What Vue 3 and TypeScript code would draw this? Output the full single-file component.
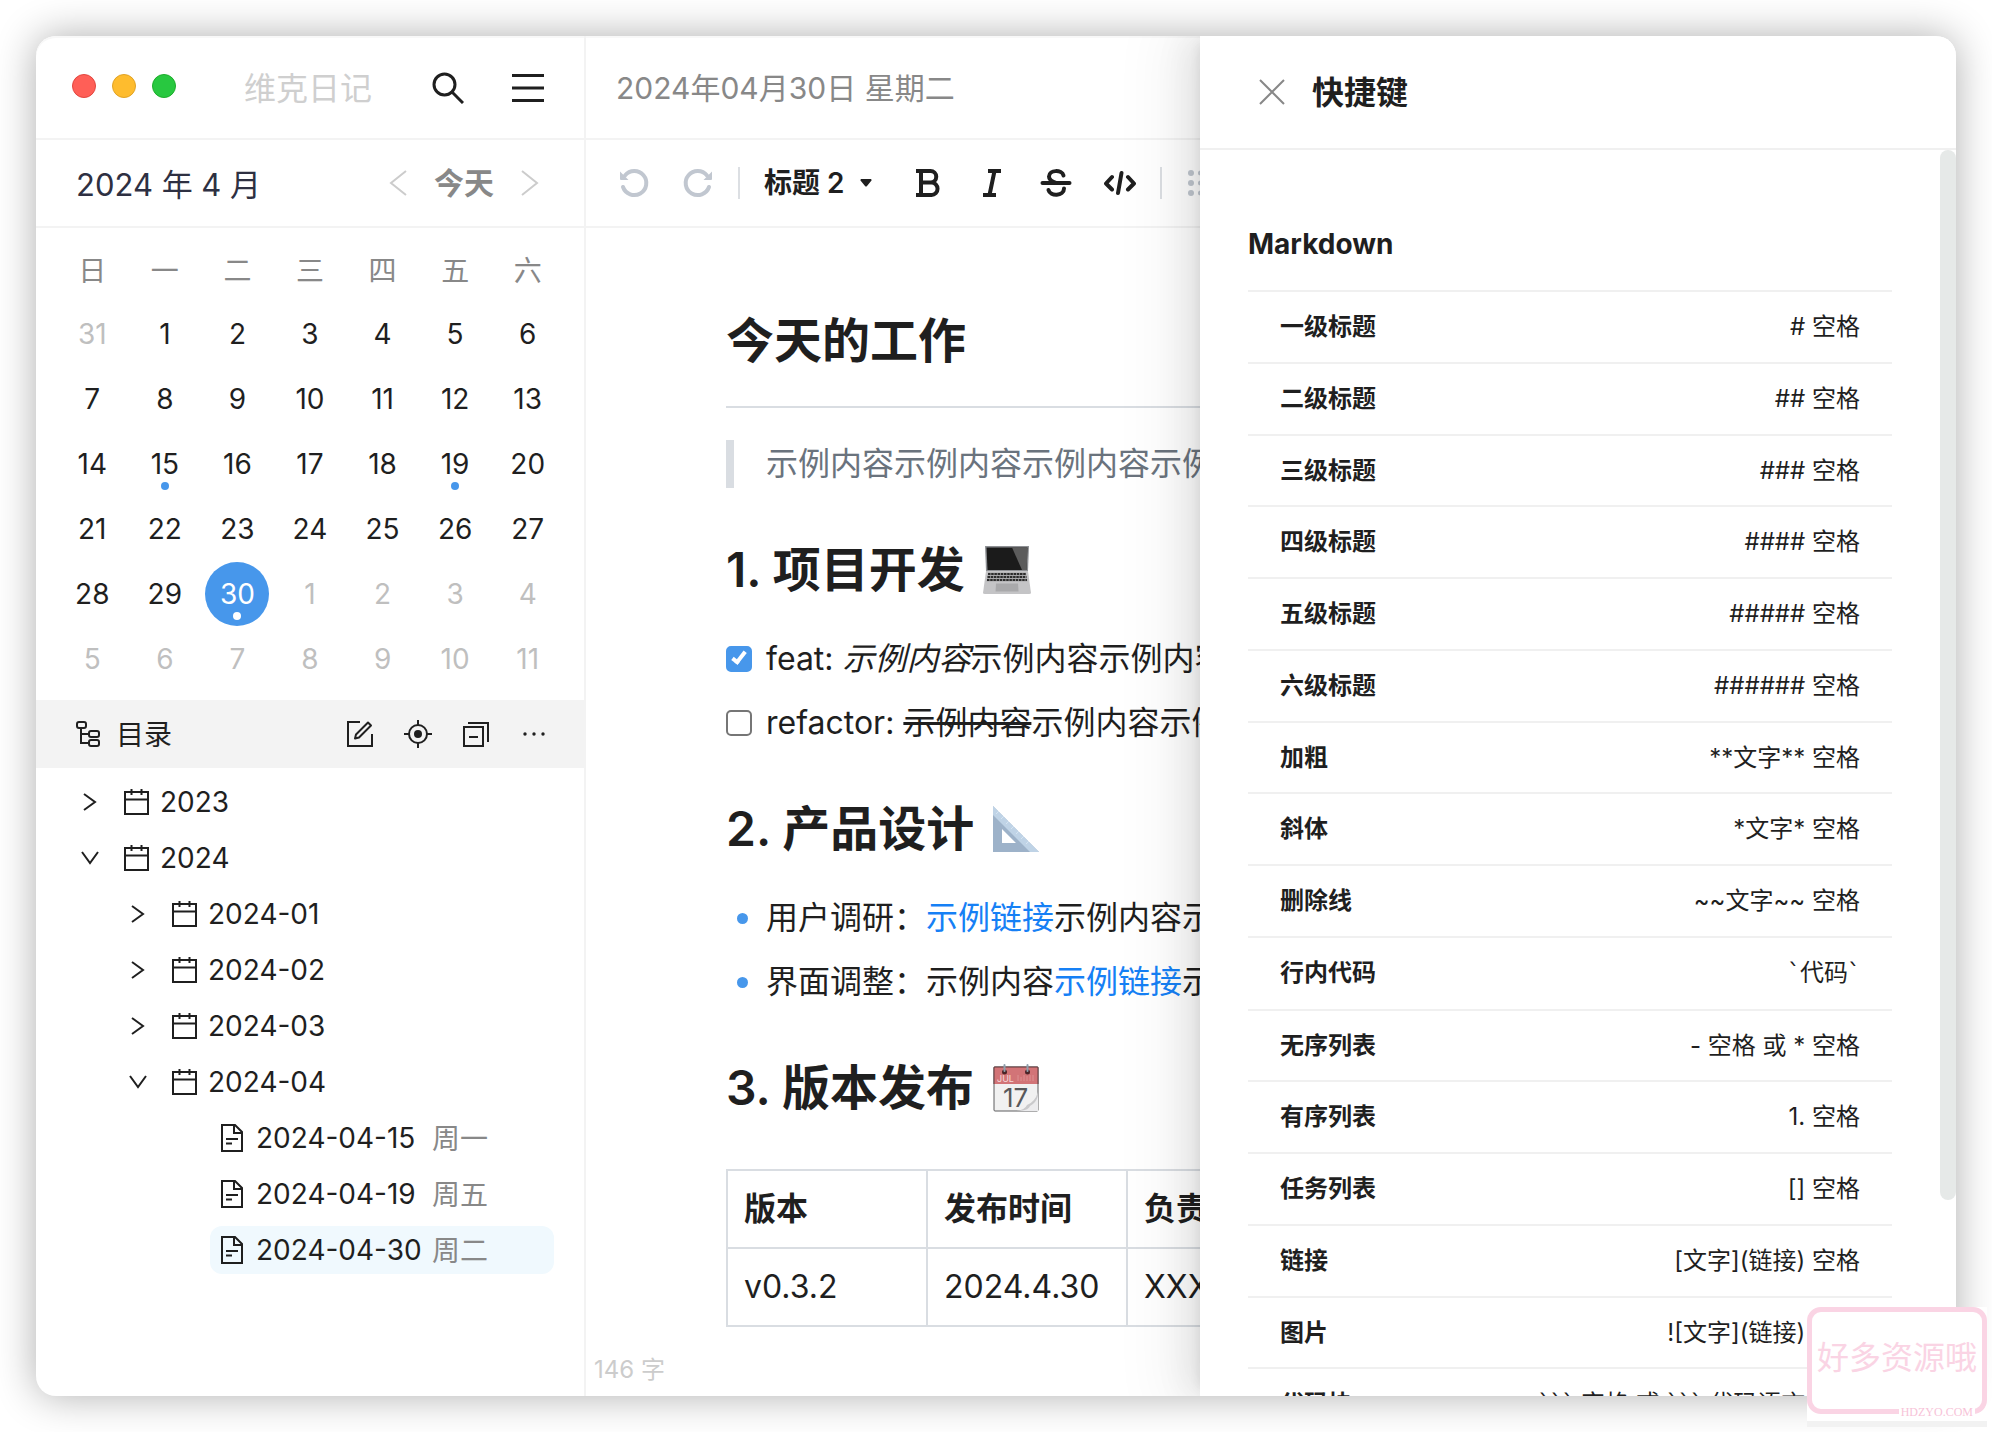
<script setup lang="ts">
import { ref } from 'vue'

interface Day {
  n: number
  out: boolean
  dot: boolean
  today: boolean
}
interface Node {
  level: number
  kind: 'open' | 'closed' | 'file'
  label: string
  week?: string
  active?: boolean
}

const weekdays = ['日', '一', '二', '三', '四', '五', '六']

// Six weeks starting on Sunday, 31 March 2024
const days: Day[] = Array.from({ length: 42 }, (_, i) => {
  const date = new Date(2024, 2, 31 + i)
  const out = date.getMonth() !== 3
  const n = date.getDate()
  return { n, out, dot: !out && [15, 19, 30].includes(n), today: !out && n === 30 }
})

const tree: Node[] = [
  { level: 0, kind: 'closed', label: '2023' },
  { level: 0, kind: 'open', label: '2024' },
  { level: 1, kind: 'closed', label: '2024-01' },
  { level: 1, kind: 'closed', label: '2024-02' },
  { level: 1, kind: 'closed', label: '2024-03' },
  { level: 1, kind: 'open', label: '2024-04' },
  { level: 2, kind: 'file', label: '2024-04-15', week: '周一' },
  { level: 2, kind: 'file', label: '2024-04-19', week: '周五' },
  { level: 2, kind: 'file', label: '2024-04-30', week: '周二', active: true },
]

const shortcuts: [string, string][] = [
  ['一级标题', '# 空格'],
  ['二级标题', '## 空格'],
  ['三级标题', '### 空格'],
  ['四级标题', '#### 空格'],
  ['五级标题', '##### 空格'],
  ['六级标题', '###### 空格'],
  ['加粗', '**文字** 空格'],
  ['斜体', '*文字* 空格'],
  ['删除线', '~~文字~~ 空格'],
  ['行内代码', '`代码`'],
  ['无序列表', '- 空格 或 * 空格'],
  ['有序列表', '1. 空格'],
  ['任务列表', '[] 空格'],
  ['链接', '[文字](链接) 空格'],
  ['图片', '![文字](链接) 空格'],
  ['代码块', '``` 空格 或 ``` 代码语言 空格'],
]

// Backticks get a wider face than the rest of the line
const parts = (text: string): string[] => text.split(/(`+)/).filter((p) => p !== '')

const block = ref('标题 2')
const featDone = ref(true)
const refactorDone = ref(false)
</script>

<template>
  <div class="desktop">
    <div class="window">
      <aside class="sidebar">
        <header class="side-head">
          <div class="lights">
            <button class="light red" aria-label="关闭"></button>
            <button class="light yellow" aria-label="最小化"></button>
            <button class="light green" aria-label="缩放"></button>
          </div>
          <span class="app-name">维克日记</span>
          <div class="side-actions">
            <button aria-label="搜索">
              <svg width="32" height="32" viewBox="0 0 32 32" fill="none" stroke="#1f1f1f" stroke-width="3">
                <circle cx="12.500" cy="12.500" r="10.500" />
                <path d="M20 20L31 31" />
              </svg>
            </button>
            <button aria-label="菜单">
              <svg width="32" height="32" viewBox="0 0 32 32" fill="#1f1f1f">
                <path d="M0 2h32v3H0zM0 14.500h32v3H0zM0 27h32v3H0z" />
              </svg>
            </button>
          </div>
        </header>

        <div class="month-bar">
          <span class="month">2024 年 4 月</span>
          <div class="month-nav">
            <button aria-label="上个月">
              <svg width="24" height="26" viewBox="0 0 24 26" fill="none" stroke="#cccccc" stroke-width="2"><path d="M20 1L5 13l15 12" /></svg>
            </button>
            <button class="today-btn">今天</button>
            <button aria-label="下个月">
              <svg width="24" height="26" viewBox="0 0 24 26" fill="none" stroke="#cccccc" stroke-width="2"><path d="M4 1l15 12L4 25" /></svg>
            </button>
          </div>
        </div>

        <div class="calendar">
          <span v-for="w in weekdays" :key="w" class="weekday">{{ w }}</span>
          <div v-for="(d, i) in days" :key="i" class="cell">
            <button class="day" :class="{ out: d.out, dot: d.dot, today: d.today }">{{ d.n }}</button>
          </div>
        </div>

        <div class="toc-head">
          <svg width="28" height="28" viewBox="0 0 28 28" fill="none" stroke="#1f1f1f" stroke-width="2">
            <rect x="3" y="2" width="9" height="6" rx="2" />
            <rect x="15" y="11" width="10" height="6" rx="2" />
            <rect x="15" y="20" width="10" height="6" rx="2" />
            <path d="M7 8v15h8M7 14h8" />
          </svg>
          <h2>目录</h2>
          <div class="toc-actions">
            <button aria-label="新建">
              <svg width="28" height="28" viewBox="0 0 28 28" fill="none" stroke="#1f1f1f" stroke-width="2">
                <path d="M14 2H2v24h24V14" />
                <path d="M10 14.500L22 2.500l3 3L13 17.500l-4 1z" stroke-linejoin="round" />
              </svg>
            </button>
            <button aria-label="定位">
              <svg width="28" height="28" viewBox="0 0 28 28" fill="none" stroke="#1f1f1f" stroke-width="2">
                <circle cx="14" cy="14" r="9" />
                <circle cx="14" cy="14" r="4" fill="#1f1f1f" stroke="none" />
                <path d="M14 0v5M14 23v5M0 14h5M23 14h5" />
              </svg>
            </button>
            <button aria-label="全部折叠">
              <svg width="28" height="28" viewBox="0 0 28 28" fill="none" stroke="#1f1f1f" stroke-width="2">
                <rect x="2" y="7" width="19" height="19" />
                <path d="M6 3h20V22M7 17h9" />
              </svg>
            </button>
            <button aria-label="更多">
              <svg width="28" height="28" viewBox="0 0 28 28" fill="#1f1f1f">
                <circle cx="5" cy="14" r="1.700" /><circle cx="14" cy="14" r="1.700" /><circle cx="23" cy="14" r="1.700" />
              </svg>
            </button>
          </div>
        </div>

        <nav class="tree">
          <div v-for="n in tree" :key="n.label" class="tree-row" :class="'level-' + n.level">
            <span class="arrow">
              <svg v-if="n.kind === 'closed'" width="28" height="28" viewBox="0 0 28 28" fill="none" stroke="#1f1f1f" stroke-width="2"><path d="M8 6l11 8-11 8" /></svg>
              <svg v-if="n.kind === 'open'" width="28" height="28" viewBox="0 0 28 28" fill="none" stroke="#1f1f1f" stroke-width="2"><path d="M6 8l8 11 8-11" /></svg>
            </span>
            <button class="node" :class="{ active: n.active }">
              <svg v-if="n.kind !== 'file'" width="28" height="28" viewBox="0 0 28 28" fill="none" stroke="#1f1f1f" stroke-width="2">
                <rect x="3" y="4" width="23" height="22" />
                <path d="M3 11.500h23M9.500 1v6M19.500 1v6" />
              </svg>
              <svg v-else width="28" height="28" viewBox="0 0 28 28" fill="none" stroke="#1f1f1f" stroke-width="2">
                <path d="M4 1h13l7 7v19H4zM16 1v8h8M8 15h12M8 19.500h6" />
              </svg>
              <span class="node-label">{{ n.label }}</span>
              <span v-if="n.week" class="node-week">{{ n.week }}</span>
            </button>
          </div>
        </nav>
      </aside>

      <main class="editor">
        <header class="edit-head">2024年04月30日 星期二</header>
        <div class="toolbar">
          <button aria-label="撤销">
            <svg width="32" height="32" viewBox="0 0 32 32" fill="none" stroke="#c1c7d0" stroke-width="4">
              <path d="M7 8.500A12 12 0 1 1 5 20" stroke-linecap="round" />
              <path d="M2 4.500V12q0 1 1 1h7.500z" fill="#c1c7d0" stroke="none" />
            </svg>
          </button>
          <button aria-label="重做">
            <svg width="32" height="32" viewBox="0 0 32 32" fill="none" stroke="#c1c7d0" stroke-width="4">
              <path d="M25 8.500A12 12 0 1 0 27 20" stroke-linecap="round" />
              <path d="M30 4.500V12q0 1-1 1h-7.500z" fill="#c1c7d0" stroke="none" />
            </svg>
          </button>
          <span class="divider"></span>
          <label class="block-type">
            <select v-model="block" aria-label="段落样式">
              <option>标题 2</option>
            </select>
            <svg width="12" height="8" viewBox="0 0 12 8" fill="#1f1f1f"><path d="M1 0h10q1 1 .5 1.500L7 7Q6 8 5 7L.5 1.500Q0 1 1 0z" /></svg>
          </label>
          <button aria-label="加粗">
            <svg width="32" height="32" viewBox="0 0 32 32" fill="none" stroke="#1f1f1f" stroke-width="4">
              <path d="M4 4h14.500a5.500 5.500 0 0 1 0 11.500H9M19.500 15.500a6 6.200 0 0 1 0 12.500H4M9 4v24" />
            </svg>
          </button>
          <button aria-label="斜体">
            <svg width="32" height="32" viewBox="0 0 32 32" fill="none" stroke="#1f1f1f" stroke-width="4">
              <path d="M12 4h13M7 28h13M18.500 4l-5 24" />
            </svg>
          </button>
          <button aria-label="删除线">
            <svg width="32" height="32" viewBox="0 0 32 32" fill="none" stroke="#1f1f1f" stroke-width="4" stroke-linecap="round">
              <path d="M2.500 16h27" />
              <path d="M23.500 8.500C22 2.500 9 2.500 9 9.500c0 3 2.500 5 7 6.500M8.500 23c1.500 6.500 15.500 6.500 15.500-1.500" />
            </svg>
          </button>
          <button aria-label="代码">
            <svg width="32" height="32" viewBox="0 0 32 32" fill="none" stroke="#1f1f1f" stroke-width="4" stroke-linecap="round" stroke-linejoin="round">
              <path d="M8 10l-6 6.500L8 22.500M24 10l6 6.500-6 6M17.500 6l-3.500 20" />
            </svg>
          </button>
          <span class="divider"></span>
          <button aria-label="无序列表">
            <svg width="32" height="32" viewBox="0 0 32 32" fill="#c1c7d0">
              <circle cx="5" cy="6" r="3" /><circle cx="5" cy="16" r="3" /><circle cx="5" cy="26" r="3" />
              <rect x="12" y="3.500" width="20" height="5" rx="2.500" />
              <rect x="12" y="13.500" width="20" height="5" rx="2.500" />
              <rect x="12" y="23.500" width="20" height="5" rx="2.500" />
            </svg>
          </button>
        </div>

        <article class="doc">
          <h2>今天的工作</h2>
          <hr />
          <blockquote>示例内容示例内容示例内容示例内容示例内容</blockquote>

          <h2>
            <span>1. 项目开发</span>
            <svg width="48" height="48" viewBox="0 0 48 48" role="img" aria-label="笔记本电脑">
              <path d="M2 0h44l-1 25H3z" fill="#8e9094" />
              <path d="M3.500 1.500h41L43.500 24h-39z" fill="#1b1b1b" />
              <path d="M29 1.500h15.500L43.700 24H39z" fill="#5c5c5c" />
              <path d="M3 25h42l3 22q0 1-2 1H2q-2 0-2-1z" fill="#c4c4c6" />
              <path d="M5 26.500h38l1.500 9h-41z" fill="#a8a8aa" />
              <path d="M5 28h38M4.500 31h39M4 34h40" stroke="#2c2c2c" stroke-width="2" stroke-dasharray="2.500 .7" />
              <path d="M13 37.500h22l.5 8h-23z" fill="#a9a9ab" />
            </svg>
          </h2>
          <ul class="tasks">
            <li>
              <input id="task-feat" v-model="featDone" type="checkbox" />
              <label for="task-feat">feat: <em>示例内容</em>示例内容示例内容示例内容</label>
            </li>
            <li>
              <input id="task-refactor" v-model="refactorDone" type="checkbox" />
              <label for="task-refactor">refactor: <s>示例内容</s>示例内容示例内容示例内容</label>
            </li>
          </ul>

          <h2>
            <span>2. 产品设计</span>
            <svg width="48" height="48" viewBox="0 0 48 48" role="img" aria-label="三角尺">
              <path d="M1 1l46 46H1zM10 24v14h14z" fill="#9db2c9" fill-rule="evenodd" />
              <path d="M1 1l46 46h-9L1 10z" fill="#bfd3e6" />
              <path d="M4 9l3-3M9 14l3-3M14 19l3-3M19 24l3-3M24 29l3-3M29 34l3-3M34 39l3-3" stroke="#d6e4f1" stroke-width="1" />
            </svg>
          </h2>
          <ul class="bullets">
            <li>用户调研：<a href="#">示例链接</a>示例内容示例内容示例内容</li>
            <li>界面调整：示例内容<a href="#">示例链接</a>示例内容示例内容</li>
          </ul>

          <h2>
            <span>3. 版本发布</span>
            <svg width="48" height="48" viewBox="0 0 48 48" role="img" aria-label="日历">
              <rect x="2" y="3" width="44" height="44" rx="1" fill="#f1f1f1" stroke="#5d5d5f" />
              <path d="M2 3h44v17H2z" fill="#d27477" />
              <path d="M2 20V3h44v17" fill="none" stroke="#5f3a3d" />
              <text x="5" y="18" font-size="9" font-weight="400" fill="#f6dada">JUL</text>
              <path d="M26 17v-6M29 17v-4M32 17v-6M35 17v-5M38 17v-6M41 17v-6" stroke="#dd9193" stroke-width="1" />
              <text x="11" y="43" font-size="26" font-weight="400" fill="#58585a">17</text>
              <path d="M46 28v19H24q9-1 11-6 8-3 11-13z" fill="#c9c9cb" />
              <path d="M46 32v15H28q9-1 10-5 6-3 8-10z" fill="#ececee" />
              <circle cx="12.500" cy="8" r="2.500" fill="#4b2427" /><circle cx="35.500" cy="8" r="2.500" fill="#4b2427" />
              <path d="M12.500 1v6M35.500 1v6" stroke="#8fa0ad" stroke-width="2" stroke-linecap="round" />
            </svg>
          </h2>
          <table>
            <thead>
              <tr><th>版本</th><th>发布时间</th><th>负责人</th></tr>
            </thead>
            <tbody>
              <tr><td>v0.3.2</td><td>2024.4.30</td><td>XXX</td></tr>
            </tbody>
          </table>
        </article>
        <footer class="count">146 字</footer>
      </main>

      <section class="drawer" aria-label="快捷键">
        <header class="drawer-head">
          <button aria-label="关闭">
            <svg width="28" height="28" viewBox="0 0 28 28" fill="none" stroke="#888888" stroke-width="2"><path d="M2 2l24 24M26 2L2 26" /></svg>
          </button>
          <h2>快捷键</h2>
        </header>
        <div class="drawer-body">
          <h3>Markdown</h3>
          <dl>
            <div v-for="s in shortcuts" :key="s[0]" class="shortcut">
              <dt>{{ s[0] }}</dt>
              <dd><span v-for="(p, i) in parts(s[1])" :key="i" :class="{ tick: p[0] === '`' }">{{ p }}</span></dd>
            </div>
          </dl>
          <div class="thumb"></div>
        </div>
      </section>
    </div>

    <div class="stamp">
      <div class="stamp-frame">好多资源哦</div>
      <span class="stamp-site">HDZYO.COM</span>
    </div>
  </div>
</template>

<style>
body {
  margin: 0;
  background: #ffffff;
}
</style>

<style scoped>
* {
  box-sizing: border-box;
}
.desktop {
  position: relative;
  height: 100vh;
  padding: 36px;
  overflow: hidden;
  color: #1f1f1f;
  font-family: Inter, "Noto Sans CJK SC", sans-serif;
  font-size: 28px;
}
button {
  display: flex;
  align-items: center;
  justify-content: center;
  padding: 0;
  border: 0;
  background: none;
  color: inherit;
  font: inherit;
}
svg {
  display: block;
  flex: none;
}
h2,
h3,
ul,
dl,
dd,
blockquote {
  margin: 0;
  padding: 0;
}
ul {
  list-style: none;
}
.window {
  position: relative;
  display: flex;
  height: 100%;
  overflow: hidden;
  border-radius: 20px;
  background: #ffffff;
  box-shadow:
    0 0 40px rgba(0, 0, 0, 0.32),
    inset 0 2px 0 #f8f8f8;
}
.sidebar {
  flex: none;
  width: 550px;
  border-right: 2px solid #f3f3f3;
}
.side-head {
  display: flex;
  align-items: center;
  height: 104px;
  padding: 0 40px 2px 36px;
  border-bottom: 2px solid #f3f3f3;
}
.lights {
  display: flex;
  gap: 16px;
}
.light {
  width: 24px;
  height: 24px;
  border: 1px solid #e2463f;
  border-radius: 50%;
  background: #ff5f57;
}
.yellow {
  border-color: #e1a325;
  background: #febc2e;
}
.green {
  border-color: #1dad2b;
  background: #28c840;
}
.app-name {
  margin-left: 68px;
  color: #cfcfcf;
  font-size: 32px;
}
.side-actions {
  display: flex;
  gap: 48px;
  margin-top: 4px;
  margin-left: auto;
}
.month-bar {
  display: flex;
  align-items: center;
  justify-content: space-between;
  height: 88px;
  padding: 0 42px 0 40px;
  border-bottom: 2px solid #f3f3f3;
  color: #2e3042;
  font-size: 30px;
}
.month {
  padding-bottom: 2px;
  font-size: 31px;
}
.month-nav {
  display: flex;
  align-items: center;
  gap: 24px;
}
.today-btn {
  padding-bottom: 4px;
  color: #888888;
  font-weight: 600;
}
.calendar {
  display: grid;
  grid-template-columns: repeat(7, 1fr);
  grid-auto-rows: 65px;
  padding: 8px 20px 9px;
}
.weekday,
.cell {
  display: flex;
  align-items: center;
  justify-content: center;
}
.weekday {
  color: #888888;
}
.day {
  position: relative;
  width: 64px;
  height: 64px;
  border-radius: 50%;
}
.out {
  color: #bfbfbf;
}
.today {
  background: #4797eb;
  color: #ffffff;
}
.dot::after {
  position: absolute;
  bottom: 6px;
  left: 28px;
  width: 8px;
  height: 8px;
  border-radius: 50%;
  background: #4797eb;
  content: "";
}
.today::after {
  background: #ffffff;
}
.toc-head {
  display: flex;
  align-items: center;
  gap: 14px;
  height: 68px;
  padding: 0 36px 0 38px;
  background: #f3f3f3;
}
.toc-head h2 {
  padding-bottom: 2px;
  font-size: 28px;
  font-weight: 400;
}
.toc-actions {
  display: flex;
  gap: 30px;
  margin-left: auto;
}
.tree {
  padding: 6px 30px 0 40px;
}
.tree-row {
  display: flex;
  align-items: center;
  gap: 10px;
  height: 56px;
}
.level-1 {
  padding-left: 48px;
}
.level-2 {
  padding-left: 96px;
}
.arrow {
  flex: none;
  width: 28px;
}
.node {
  flex: 1;
  justify-content: flex-start;
  gap: 10px;
  height: 48px;
  padding: 0 8px;
  border-radius: 12px;
}
.level-2 .node-label {
  width: 166px;
  text-align: left;
  white-space: nowrap;
}
.node.active {
  background: #f0f9fe;
}
.node-week {
  padding-bottom: 2px;
  color: #888888;
}
.editor {
  display: flex;
  flex: 1;
  flex-direction: column;
  min-width: 0;
}
.edit-head {
  display: flex;
  flex: none;
  align-items: center;
  height: 104px;
  padding: 0 0 2px 30px;
  border-bottom: 2px solid #f3f3f3;
  color: #888888;
  font-size: 30px;
}
.toolbar {
  display: flex;
  flex: none;
  align-items: center;
  gap: 32px;
  height: 88px;
  padding-left: 32px;
  border-bottom: 2px solid #f3f3f3;
}
.divider {
  width: 2px;
  height: 32px;
  margin: 0 -8px;
  background: #dcdfe3;
}
.block-type {
  display: flex;
  align-items: center;
  justify-content: space-between;
  width: 116px;
  padding-right: 8px;
}
.block-type select {
  padding: 0;
  border: 0;
  appearance: none;
  background: none;
  color: inherit;
  font: inherit;
  font-size: 28px;
  font-weight: 600;
}
.doc {
  flex: 1;
  min-height: 0;
  padding: 81px 140px 0;
  overflow: hidden;
  font-size: 32px;
  line-height: 48px;
  white-space: nowrap;
}
.doc h2 {
  display: flex;
  align-items: center;
  gap: 18px;
  margin: 50px 0 33px;
  font-size: 48px;
  font-weight: 600;
  line-height: 64px;
}
.doc h2:first-child {
  margin-top: 0;
}
hr {
  height: 2px;
  margin: 33px 0 32px;
  border: 0;
  background: #d9dde2;
}
blockquote {
  padding-left: 32px;
  overflow: hidden;
  border-left: 8px solid #d9dde2;
  color: #6a737d;
}
.tasks,
.bullets {
  display: flex;
  flex-direction: column;
  gap: 16px;
}
.tasks li {
  display: flex;
  align-items: center;
  gap: 14px;
}
.tasks input {
  position: relative;
  flex: none;
  width: 26px;
  height: 26px;
  margin: 0;
  border: 2px solid #767676;
  border-radius: 5px;
  appearance: none;
  background: #ffffff;
}
.tasks input:checked {
  border-color: #4797eb;
  background: #4797eb;
}
.tasks input:checked::after {
  position: absolute;
  top: 1px;
  left: 7px;
  width: 4px;
  height: 11px;
  border: solid #ffffff;
  border-width: 0 4px 4px 0;
  transform: rotate(38deg);
  content: "";
}
.bullets li {
  display: flex;
  align-items: center;
}
.bullets li::before {
  flex: none;
  width: 11px;
  height: 11px;
  margin: 0 18px 0 11px;
  border-radius: 50%;
  background: #4797eb;
  content: "";
}
a {
  color: #1680f5;
  text-decoration: none;
}
s {
  text-decoration-thickness: 3px;
}
table {
  width: 602px;
  margin-top: 49px;
  border-collapse: collapse;
  table-layout: fixed;
}
th,
td {
  height: 78px;
  padding: 0 16px;
  border: 2px solid #d9dde2;
  text-align: left;
}
th {
  font-weight: 600;
}
.count {
  display: flex;
  flex: none;
  align-items: center;
  height: 54px;
  padding: 0 0 4px 8px;
  color: #cccccc;
  font-size: 24px;
}
.drawer {
  position: absolute;
  top: 0;
  right: 0;
  bottom: 0;
  display: flex;
  flex-direction: column;
  width: 756px;
  background: #ffffff;
  box-shadow:
    -12px 0 32px rgba(0, 0, 0, 0.08),
    -6px 0 12px -8px rgba(0, 0, 0, 0.12),
    -18px 0 56px 16px rgba(0, 0, 0, 0.05);
}
.drawer-head {
  display: flex;
  flex: none;
  align-items: center;
  gap: 26px;
  height: 114px;
  padding-left: 58px;
  border-bottom: 2px solid #f0f0f0;
}
.drawer-head h2 {
  padding-bottom: 4px;
  font-size: 32px;
  font-weight: 600;
}
.drawer-body {
  position: relative;
  flex: 1;
  min-height: 0;
  padding: 76px 64px 0 48px;
  overflow: hidden;
}
.drawer-body h3 {
  margin-bottom: 28px;
  font-size: 28px;
  font-weight: 700;
  line-height: 36px;
}
.shortcut {
  display: flex;
  justify-content: space-between;
  padding: 16px 32px;
  border-top: 2px solid #f0f0f0;
  font-size: 24px;
  line-height: 1.573;
}
.shortcut dt {
  font-weight: 600;
}
.shortcut dd {
  white-space: pre;
}
.tick {
  font-family: "DejaVu Sans", sans-serif;
}
.thumb {
  position: absolute;
  top: 0;
  right: 0;
  bottom: 196px;
  width: 16px;
  border-radius: 8px;
  background: #e6e9e8;
}
.stamp {
  position: absolute;
  right: 5px;
  bottom: 5px;
  width: 180px;
  height: 120px;
  border-bottom: 6px solid #f2f2f2;
  background: #ffffff;
}
.stamp-frame {
  height: 107px;
  border: 5px solid #fad4e4;
  border-radius: 14px;
  color: #fad4e4;
  font-size: 32px;
  font-weight: 400;
  line-height: 92px;
  text-align: center;
  white-space: nowrap;
}
.stamp-site {
  position: absolute;
  right: 12px;
  bottom: 0;
  padding: 0 2px;
  background: #ffffff;
  color: #f7c3d8;
  font-family: "Liberation Serif", serif;
  font-size: 12px;
  line-height: 18px;
}
</style>
